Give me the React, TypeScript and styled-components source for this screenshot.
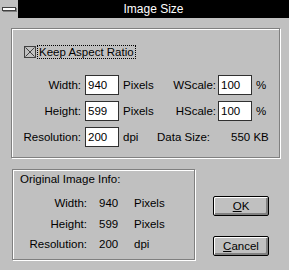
import { Fragment } from "react";
import styled, { createGlobalStyle } from "styled-components";

const GlobalStyle = createGlobalStyle`
  body {
    margin: 0;
  }
  * {
    box-sizing: border-box;
  }
`;

const Window = styled.div`
  width: 289px;
  height: 270px;
  background-color: #c0c0c0;
  font-family: "Liberation Sans", Arial, sans-serif;
  font-size: 11.5px;
  color: #000;
  overflow: hidden;
`;

const TitleBar = styled.div`
  display: flex;
  height: 18px;
  background-color: #000;
`;

const SysMenu = styled.div`
  width: 18px;
  height: 18px;
  background-color: #c0c0c0;
  display: flex;
  align-items: center;
  justify-content: center;
`;

const SysBar = styled.div`
  width: 14px;
  height: 4px;
  background-color: #fff;
  border: 1px solid #404040;
  box-shadow: 1px 1px 0 #808080;
`;

const Title = styled.div`
  flex: 1;
  color: #fff;
  text-align: center;
  line-height: 18px;
  font-size: 12px;
`;

const Body = styled.div`
  padding: 10px 9px 0 11px;
`;

const Etched = styled.div`
  border: 1px solid #808080;
  box-shadow: inset 1px 1px 0 #fff, 1px 1px 0 #fff;
`;

const TopGroup = styled(Etched)`
  height: 130px;
  padding-top: 16px;
`;

const CheckRow = styled.div`
  display: flex;
  align-items: center;
  height: 14px;
  padding-left: 12px;
`;

const CheckLabel = styled.span`
  margin-left: 1px;
  padding: 0 1px;
  border: 1px dotted #000;
  line-height: 12px;
`;

const FieldGrid = styled.div`
  display: grid;
  grid-template-columns: 69px 38px 38px 59px 36px auto;
  grid-auto-rows: 20px;
  row-gap: 6px;
  margin-top: 16px;
  align-items: center;
  white-space: nowrap;
`;

const Label = styled.div<{ $pr?: number }>`
  text-align: right;
  padding-right: ${(p) => p.$pr ?? 0}px;
`;

const Unit = styled.div<{ $span?: string; $pl?: number }>`
  grid-column: ${(p) => p.$span ?? "auto"};
  padding-left: ${(p) => p.$pl ?? 4}px;
`;

const Input = styled.div<{ $ml: number }>`
  width: 34px;
  height: 20px;
  margin-left: ${(p) => p.$ml}px;
  background-color: #fff;
  border: 1px solid #303030;
  padding-left: 2px;
  line-height: 18px;
`;

const LowerRow = styled.div`
  display: flex;
  margin-top: 11px;
`;

const InfoBox = styled(Etched)`
  width: 183px;
  height: 91px;
  margin-left: 1px;
  padding-top: 2px;
`;

const InfoTitle = styled.div`
  padding-left: 7px;
  line-height: 14px;
`;

const InfoGrid = styled.div`
  display: grid;
  grid-template-columns: 74px 47px auto;
  grid-auto-rows: 20.5px;
  margin-top: 7px;
  align-items: center;
`;

const InfoLabel = styled.div`
  text-align: right;
`;

const InfoValue = styled.div`
  padding-left: 12px;
`;

const Buttons = styled.div`
  display: flex;
  flex-direction: column;
  gap: 20px;
  margin-left: 18px;
  padding-top: 27px;
`;

const Button = styled.button`
  width: 56px;
  height: 20px;
  padding: 0;
  background-color: #c0c0c0;
  border: 1px solid #000;
  border-radius: 2px;
  box-shadow: inset 1px 1px 0 #fff, inset -1px -1px 0 #808080,
    inset -2px -2px 0 #808080;
  font-family: inherit;
  font-size: 11.5px;
  color: #000;
  line-height: 17px;
`;

function CheckBox() {
  return (
    <svg width="12" height="12" viewBox="0 0 12 12">
      <rect x="0.5" y="0.5" width="11" height="11" fill="#c0c0c0" stroke="#404040" />
      <path d="M1.5 1.5 L10.5 10.5 M10.5 1.5 L1.5 10.5" stroke="#404040" strokeWidth="1" />
    </svg>
  );
}

const fields = [
  { label: "Width:", value: "940", unit: "Pixels", scale: "WScale:" },
  { label: "Height:", value: "599", unit: "Pixels", scale: "HScale:" },
];

const info = [
  { label: "Width:", value: "940", unit: "Pixels" },
  { label: "Height:", value: "599", unit: "Pixels" },
  { label: "Resolution:", value: "200", unit: "dpi" },
];

export default function App() {
  return (
    <Window>
      <GlobalStyle />
      <TitleBar>
        <SysMenu>
          <SysBar />
        </SysMenu>
        <Title>Image Size</Title>
      </TitleBar>
      <Body>
        <TopGroup>
          <CheckRow>
            <CheckBox />
            <CheckLabel>Keep Aspect Ratio</CheckLabel>
          </CheckRow>
          <FieldGrid>
            {fields.map((f) => (
              <Fragment key={f.label}>
                <Label>{f.label}</Label>
                <Input $ml={4}>{f.value}</Input>
                <Unit>{f.unit}</Unit>
                <Label>{f.scale}</Label>
                <Input $ml={2}>100</Input>
                <Unit>%</Unit>
              </Fragment>
            ))}
            <Label>Resolution:</Label>
            <Input $ml={4}>200</Input>
            <Unit>dpi</Unit>
            <Label $pr={7}>Data Size:</Label>
            <Unit $span="5 / 7" $pl={15}>
              550 KB
            </Unit>
          </FieldGrid>
        </TopGroup>
        <LowerRow>
          <InfoBox>
            <InfoTitle>Original Image Info:</InfoTitle>
            <InfoGrid>
              {info.map((r) => (
                <Fragment key={r.label}>
                  <InfoLabel>{r.label}</InfoLabel>
                  <InfoValue>{r.value}</InfoValue>
                  <div>{r.unit}</div>
                </Fragment>
              ))}
            </InfoGrid>
          </InfoBox>
          <Buttons>
            <Button>
              <u>O</u>K
            </Button>
            <Button>
              <u>C</u>ancel
            </Button>
          </Buttons>
        </LowerRow>
      </Body>
    </Window>
  );
}
